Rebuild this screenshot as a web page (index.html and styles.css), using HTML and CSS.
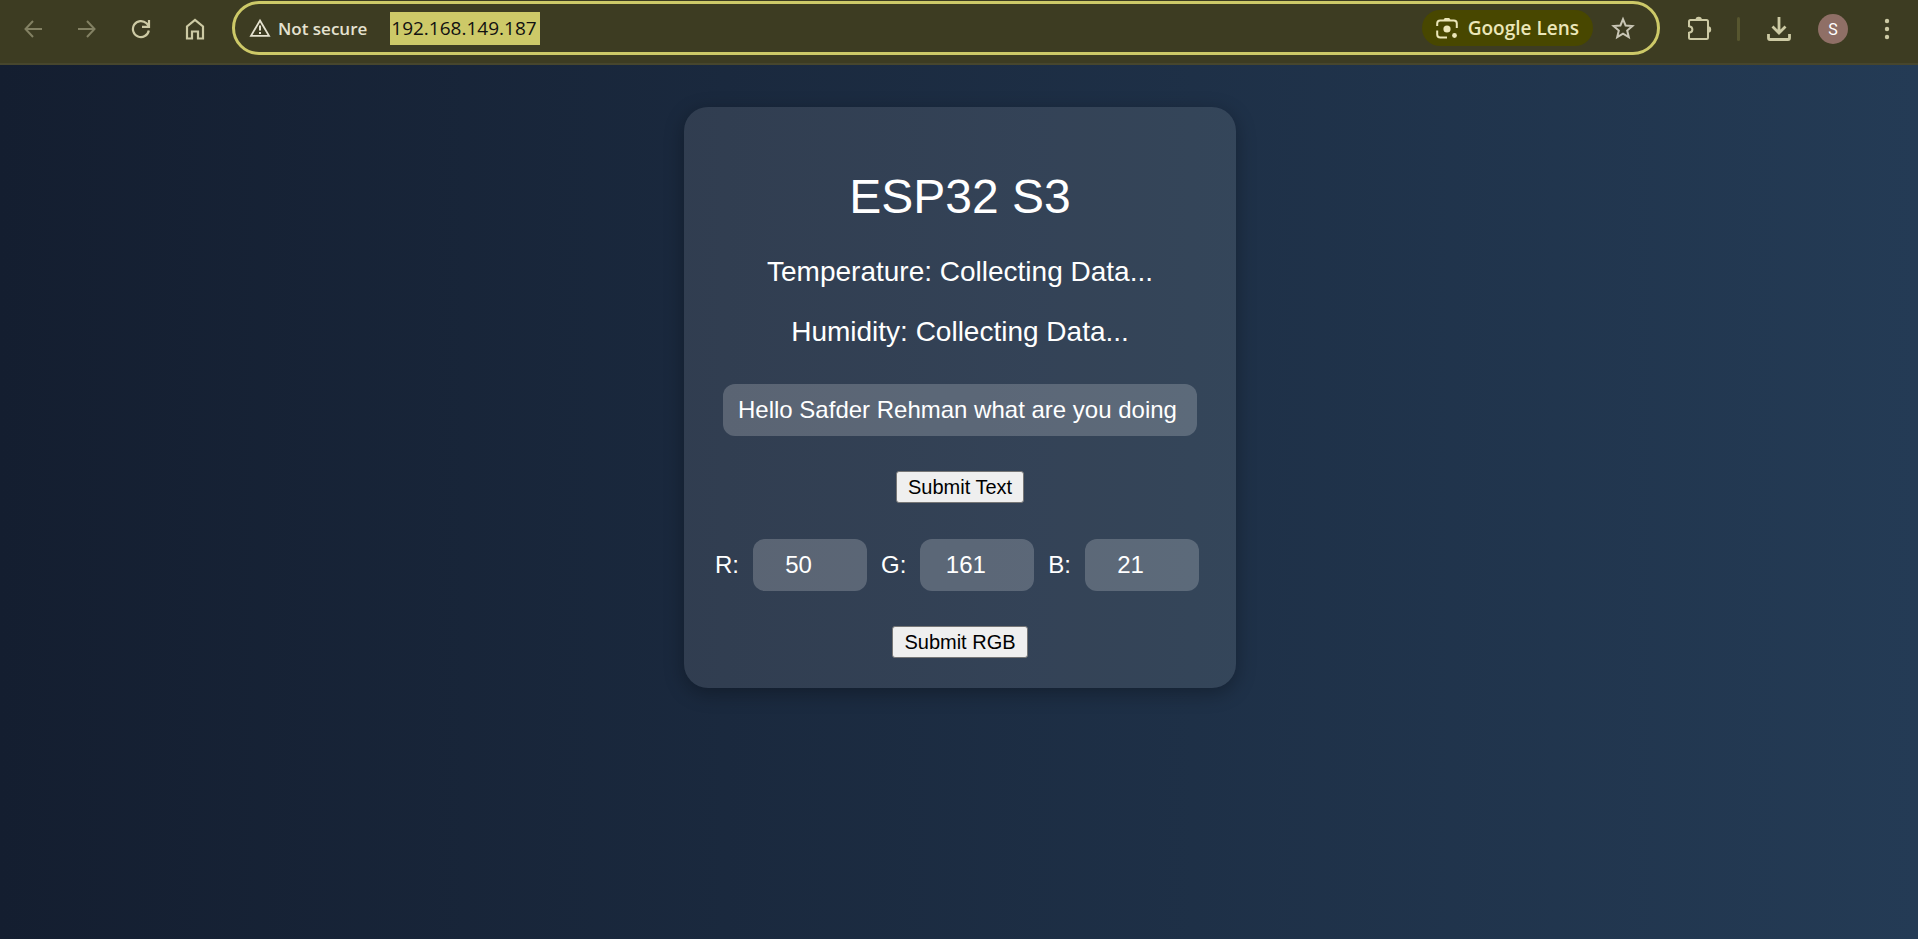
FILE: index.html
```
<!DOCTYPE html>
<html lang="en">
<head>
<meta charset="utf-8">
<title>ESP32 S3</title>
<link rel="stylesheet" href="styles.css">
</head>
<body>
<header class="toolbar">
  <nav class="nav" aria-label="Browser">
    <button class="icon-button dim" aria-label="Back"><svg width="20" height="20" viewBox="0 0 20 20"><path d="M19 10H2.500M10 2L2.500 10l7.500 8" fill="none" stroke="currentColor" stroke-width="2"/></svg></button>
    <button class="icon-button dim" aria-label="Forward"><svg width="20" height="20" viewBox="0 0 20 20"><path d="M1 10h16.500M10 2l7.500 8-7.500 8" fill="none" stroke="currentColor" stroke-width="2"/></svg></button>
    <button class="icon-button" aria-label="Reload"><svg width="20" height="20" viewBox="0 0 20 20"><path d="M17.800 11.500A8 8 0 1 1 15.500 4.300L17.500 6.500M18 1v6.800h-7" fill="none" stroke="currentColor" stroke-width="2.200"/></svg></button>
    <button class="icon-button" aria-label="Home"><svg width="20" height="22" viewBox="0 0 20 22"><path d="M2 20.500V8.500L10 2l8 6.500v12h-5v-7H7v7z" fill="none" stroke="currentColor" stroke-width="2.200"/></svg></button>
  </nav>
  <div class="omnibox">
    <button class="security"><svg width="22" height="20" viewBox="0 0 22 20"><path d="M11 2.500L20 17.800H2z" fill="none" stroke="currentColor" stroke-width="1.800"/><path d="M11 7.500v5M11 14v2" stroke="currentColor" stroke-width="2"/></svg><span>Not secure</span></button>
    <div class="address"><input class="url" type="text" value="192.168.149.187" aria-label="Address"></div>
    <button class="lens"><svg width="22" height="22" viewBox="0 0 22 22"><path d="M1.200 9V6.500a3 3 0 0 1 3-3h13.600a3 3 0 0 1 3 3V11M1.200 13.500v4a3 3 0 0 0 3 3H11" fill="none" stroke="currentColor" stroke-width="2"/><path d="M7.500 3l1.200-2h4.600l1.200 2z" fill="currentColor"/><circle cx="11" cy="12" r="3.600" fill="currentColor"/><circle cx="18.500" cy="18.500" r="2.400" fill="currentColor"/></svg><span>Google Lens</span></button>
    <button class="icon-button star" aria-label="Bookmark"><svg width="24" height="24" viewBox="0 0 24 24"><path d="M12 3.200l2.600 6.300 6.800.6-5.200 4.400 1.600 6.700L12 17.600l-5.800 3.600 1.600-6.700-5.200-4.400 6.800-.6z" fill="none" stroke="currentColor" stroke-width="2"/></svg></button>
  </div>
  <div class="actions">
    <button class="icon-button" aria-label="Extensions"><svg width="26" height="26" viewBox="0 0 26 26"><path d="M3.500 4h16A1.500 1.500 0 0 1 21 5.500v16a1.500 1.500 0 0 1-1.500 1.500h-16A1.500 1.500 0 0 1 2 21.500v-4.700c4.500-.6 4.500-6 0-6.600V5.500A1.500 1.500 0 0 1 3.500 4z" fill="none" stroke="currentColor" stroke-width="2"/><path d="M8.500 4a3.200 3.200 0 0 1 6.400 0zM21 10.300a3.200 3.200 0 0 1 0 6.400z" fill="currentColor"/></svg></button>
    <span class="divider"></span>
    <button class="icon-button" aria-label="Downloads"><svg width="24" height="24" viewBox="0 0 24 24"><path d="M12 0v15M5.500 9.500L12 16l6.500-6.500M1.500 17v4a1.500 1.500 0 0 0 1.500 1.500h18a1.500 1.500 0 0 0 1.500-1.500v-4" fill="none" stroke="currentColor" stroke-width="2.800"/></svg></button>
    <button class="avatar" aria-label="Profile">S</button>
    <button class="icon-button menu" aria-label="Menu"><svg width="6" height="24" viewBox="0 0 6 24"><g fill="currentColor"><circle cx="3" cy="4" r="2.200"/><circle cx="3" cy="12" r="2.200"/><circle cx="3" cy="20" r="2.200"/></g></svg></button>
  </div>
</header>
<main class="page">
  <section class="card">
    <h1 class="title">ESP32 S3</h1>
    <p class="reading">Temperature: Collecting Data...</p>
    <p class="reading">Humidity: Collecting Data...</p>
    <form class="form">
      <input class="field message" type="text" value="Hello Safder Rehman what are you doing" aria-label="Text">
      <button class="submit" type="button">Submit Text</button>
    </form>
    <form class="form">
      <div class="channels">
        <label for="r">R:</label><input class="field channel" id="r" type="number" value="50">
        <label for="g">G:</label><input class="field channel" id="g" type="number" value="161">
        <label for="b">B:</label><input class="field channel" id="b" type="number" value="21">
      </div>
      <button class="submit" type="button">Submit RGB</button>
    </form>
  </section>
</main>
</body>
</html>
```
FILE: styles.css
```
* { box-sizing: border-box; }

body {
  margin: 0;
  min-height: 100vh;
  display: flex;
  flex-direction: column;
  font-family: "Liberation Sans", Arial, sans-serif;
  color: #fff;
  background: #141e30;
}

button, input { font-family: inherit; color: inherit; }

/* Browser toolbar */
.toolbar {
  display: flex;
  align-items: flex-start;
  height: 65px;
  padding: 1px 13px 0 15px;
  background: #3d3c22;
  border-bottom: 2px solid #47462d;
  color: #cdcaa4;
  font-family: "Open Sans", "Noto Sans", sans-serif;
}

.toolbar button {
  display: flex;
  align-items: center;
  justify-content: center;
  padding: 0;
  border: 0;
  background: none;
}

.toolbar svg { flex: none; }

.nav, .actions { display: flex; align-items: center; height: 56px; }
.nav { gap: 18px; }
.icon-button { width: 36px; height: 36px; }
.toolbar .dim { color: #838163; }

.omnibox {
  flex: 1;
  display: flex;
  align-items: center;
  height: 54px;
  margin: 0 22px 0 19px;
  padding: 0 16px 0 14px;
  border: 3px solid #cdc968;
  border-radius: 27px;
}

.toolbar .security {
  gap: 7px;
  margin-right: 23px;
  font-size: 17px;
  font-weight: 600;
  color: #e5e2d0;
}

.address { flex: 1; display: flex; }

.url {
  width: 150px;
  height: 33px;
  padding: 0 1px;
  border: 0;
  background: #cdc968;
  color: #111;
  font-size: 19px;
}

.toolbar .lens {
  gap: 10px;
  height: 36px;
  padding: 0 14px;
  border-radius: 18px;
  background: #484700;
  color: #ebe6b8;
  font-size: 19px;
  font-weight: 600;
}

.star { margin-left: 12px; }
.toolbar .star { color: #c9c6b5; }

.divider { width: 3px; height: 24px; margin: 0 21px 0 19px; border-radius: 2px; background: #57562f; }

.toolbar .avatar {
  width: 30px;
  height: 30px;
  margin: 0 21px;
  border-radius: 50%;
  background: #8f6f66;
  color: #fff;
  font-family: Roboto, sans-serif;
  font-size: 16px;
}

/* Device page */
.page {
  flex: 1;
  display: flex;
  justify-content: center;
  align-items: flex-start;
  padding: 42px 0 40px 2px;
  background: linear-gradient(to right, #141e30, #243b55);
}

.card {
  width: 552px;
  padding: 30px;
  border-radius: 24px;
  background: rgba(255, 255, 255, 0.1);
  box-shadow: 0 5px 20px rgba(0, 0, 0, 0.3);
  text-align: center;
}

.title { margin: 32px 0 31px; font-size: 48px; font-weight: 400; line-height: 56px; }
.reading { margin: 28px 0; font-size: 28px; line-height: 32px; }

.form { display: flex; flex-direction: column; align-items: center; gap: 35px; margin-top: 36px; }

.field {
  height: 52px;
  padding: 0 15px;
  border: 0;
  border-radius: 12px;
  background: rgba(255, 255, 255, 0.2);
  font-size: 24px;
}

.message { width: 474px; }

.channels {
  display: flex;
  align-items: center;
  gap: 14px;
  padding-right: 6px;
  font-size: 24px;
}

.channel {
  width: 114px;
  padding-right: 38px;
  text-align: center;
  appearance: textfield;
}

.channel::-webkit-inner-spin-button { appearance: none; margin: 0; }

.submit {
  height: 32px;
  padding: 0 11px;
  border: 1px solid #767676;
  border-radius: 3px;
  background: #efefef;
  color: #000;
  font-size: 20px;
}
```
